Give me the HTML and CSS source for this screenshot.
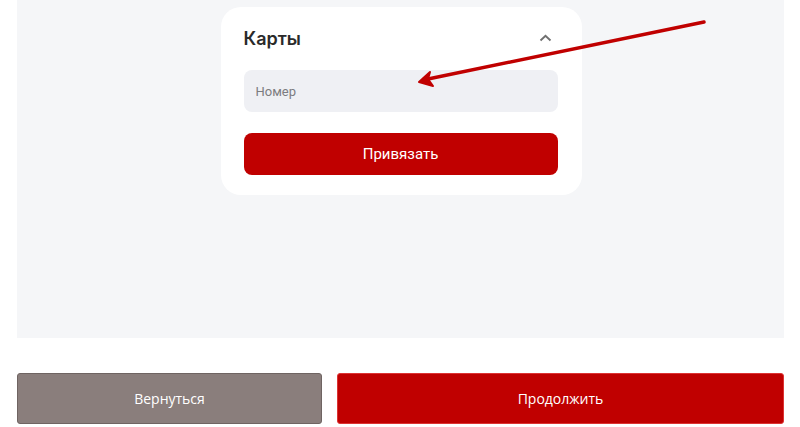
FILE: index.html
```html
<!DOCTYPE html>
<html lang="ru">
<head>
<meta charset="utf-8">
<link rel="stylesheet" href="styles.css">
</head>
<body>
<div class="page">
  <section class="panel">
    <div class="card">
      <div class="card-head">
        <h2 class="card-title">Карты</h2>
        <svg class="chevron" width="13" height="8" viewBox="0 0 13 8"><path d="M1.5 6.5 L6.5 1.8 L11.5 6.5" fill="none" stroke="#707070" stroke-width="1.9"/></svg>
      </div>
      <input class="field" type="text" placeholder="Номер">
      <button class="btn-bind">Привязать</button>
    </div>
  </section>
  <div class="actions">
    <button class="btn-back">Вернуться</button>
    <button class="btn-next">Продолжить</button>
  </div>
  <svg class="arrow" width="800" height="120" viewBox="0 0 800 120">
    <path d="M704 22 L428 79" fill="none" stroke="#c00000" stroke-width="3.5" stroke-linecap="round"/>
    <path d="M419 82 L430 72 L428 79 L433 86 Z" fill="#c00000" stroke="#c00000" stroke-width="2" stroke-linejoin="round"/>
  </svg>
</div>
</body>
</html>
```
FILE: styles.css
```css
* { box-sizing: border-box; }
html, body { margin: 0; padding: 0; background: #fff; }
body { font-family: Roboto, "Noto Sans", "Liberation Sans", sans-serif; }
.page { position: relative; width: 800px; height: 427px; padding: 0 16px 0 17px; }
.panel { height: 338px; background: #f5f6f8; padding-top: 7px; display: flex; justify-content: center; align-items: flex-start; }
.card { width: 361px; background: #fff; border-radius: 20px; padding: 11px 24px 20px 23px; display: flex; flex-direction: column; margin-left: 1px; }
.card-head { height: 40px; display: flex; align-items: center; justify-content: space-between; margin-bottom: 12px; }
.card-title { margin: 0; font-family: Inter, Roboto, sans-serif; font-size: 18px; font-weight: 600; color: #2a2a2a; letter-spacing: 0; }
.chevron { margin-right: 6px; margin-top: -1px; }
.field { height: 42px; border: none; border-radius: 8px; background: #eff0f4; padding: 0 12px; font-family: Roboto, sans-serif; font-size: 13px; color: #333; outline: none; }
.field::placeholder { color: #7c7c80; }
.btn-bind { margin-top: 21px; height: 42px; border: none; border-radius: 8px; background: #c00000; color: #fff; font-family: Roboto, sans-serif; font-size: 15px; }
.actions { margin-top: 35px; display: flex; gap: 15px; height: 51px; }
.btn-back { width: 305px; border: 1px solid #6f6462; border-radius: 3px; background: #8a7e7c; color: #fff; font-family: "Open Sans", sans-serif; font-size: 14px; }
.btn-next { flex: 1; border: 1px solid #d33; border-radius: 3px; background: #c00000; color: #fff; font-family: "Open Sans", sans-serif; font-size: 14px; }
.arrow { position: absolute; left: 0; top: 0; pointer-events: none; }
```
